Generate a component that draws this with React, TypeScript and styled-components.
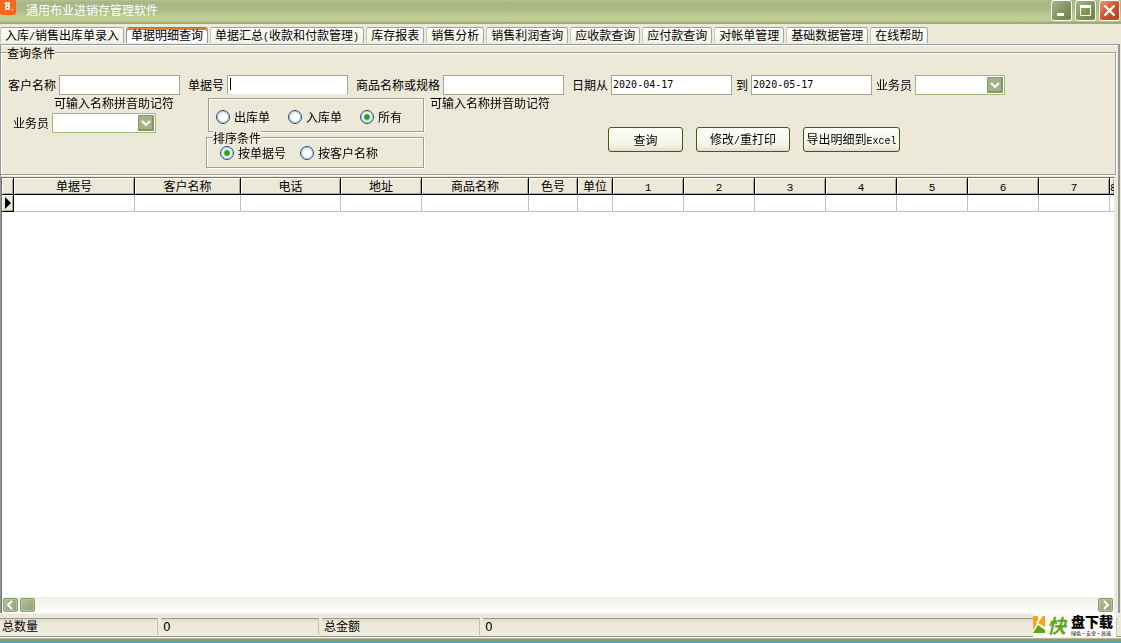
import React from "react";
import styled, { createGlobalStyle, css } from "styled-components";

const Global = createGlobalStyle`
  *, *::before, *::after { box-sizing: border-box; }
  body {
    margin: 0;
    background: #ece9d8;
    color: #000;
    font: 12px/14px "Noto Sans CJK SC", sans-serif;
  }
  button, input, select { font: inherit; color: inherit; margin: 0; padding: 0; border-radius: 0; }
`;

const Window = styled.div`
  display: flex;
  flex-direction: column;
  min-height: 100vh;
`;

const TitleBar = styled.header`
  display: flex;
  align-items: flex-start;
  height: 24px;
  padding-right: 1px;
  background: linear-gradient(#b4c293 0, #a6b583 3px, #abba87 10px, #bfce94 17px, #bdcb91 21px, #98a66f 23px, #a9b285 24px);
`;

const AppIcon = styled.svg`
  width: 16px;
  height: 16px;
  flex: none;
`;

const Title = styled.h1`
  flex: 1;
  margin: 0;
  padding: 3px 0 0 10px;
  font-size: 12px;
  line-height: 14px;
  font-weight: 400;
  color: #fff;
`;

const Captions = styled.div`
  display: flex;
  gap: 3px;
`;

const CaptionButton = styled.button<{ $close?: boolean }>`
  display: grid;
  place-items: center;
  width: 21px;
  height: 21px;
  border: 1px solid #fff;
  border-radius: 3px;
  background: ${(p) =>
    p.$close
      ? "linear-gradient(135deg, #e79c7c, #d2502b 50%, #b8431f)"
      : "linear-gradient(135deg, #a9b687, #86965f 50%, #6f7f49)"};
`;

const Tabs = styled.nav`
  display: flex;
  align-items: flex-end;
  gap: 2px;
  height: 20px;
  padding-bottom: 1px;
`;

const Tab = styled.button<{ $active?: boolean }>`
  height: 16px;
  padding: 0 4px 1px;
  border: 1px solid #919b9c;
  border-color: #a0a09a #9aac98 transparent #c9cbbd;
  border-bottom: 0;
  border-radius: 3px 3px 0 0;
  background: linear-gradient(#fdfdf9, #f3f1e4);
  line-height: 14px;
  white-space: nowrap;
  ${(p) =>
    p.$active &&
    css`
      background: #fcfcfe;
      border-color: #919b9c;
      box-shadow: inset 0 2px #e08234;
      border-top-color: #c9692a;
    `}
`;

const Half = styled.span`
  font-family: "Liberation Mono", monospace;
  font-size: 10px;
  line-height: 10px;
`;

const Page = styled.main`
  flex: 1;
  display: flex;
  flex-direction: column;
  margin-right: 1px;
  padding: 1px 2px 0 0;
  border: 1px solid #919b9c;
  border-right-width: 2px;
  border-bottom: 0;
  box-shadow: inset 0 1px #fff;
`;

const etched = css`
  border: 1px solid #9d9d9a;
  box-shadow: 1px 1px #fff, inset 1px 1px #fff;
`;

const Query = styled.fieldset`
  ${etched}
  position: relative;
  height: 123px;
  margin: 6px 0 2px;
  padding: 22px 0 0 7px;
  border-left: 0;
  min-width: 0;
`;

const Caption = styled.legend`
  position: absolute;
  top: -7px;
  left: 6px;
  padding: 0;
  background: #ece9d8;
`;

const Row = styled.div`
  display: flex;
  align-items: flex-start;
  & + & { margin-top: 1px; }
`;

const Field = styled.label<{ $after?: number }>`
  display: flex;
  align-items: center;
  gap: 3px;
  margin-right: ${(p) => p.$after ?? 8}px;
  white-space: nowrap;
`;

const TextBox = styled.input`
  width: 121px;
  height: 20px;
  padding: 0 1px 2px;
  border: 1px solid #a5a58f;
  background: #fff;
  font: 10px/16px "DejaVu Sans Mono", monospace;
  outline: 0;
  caret-color: transparent;
  &:focus {
    background: linear-gradient(#000, #000) 2px 2px / 1px 12px no-repeat #fff;
    border-bottom-color: #ece9d8;
  }
`;

const SelectWrap = styled.span<{ $w: number }>`
  position: relative;
  display: block;
  width: ${(p) => p.$w}px;
  height: 20px;
`;

const Select = styled.select`
  appearance: none;
  display: block;
  width: 100%;
  height: 100%;
  border: 1px solid #a2b77c;
  background: #fff;
  outline: 0;
`;

const Arrow = styled.svg`
  position: absolute;
  top: 2px;
  right: 2px;
  width: 16px;
  height: 16px;
  pointer-events: none;
`;

const LeftBlock = styled.div`
  display: flex;
  flex-direction: column;
  gap: 3px;
  width: 198px;
`;

const Hint = styled.span<{ $indent?: number }>`
  padding-left: ${(p) => p.$indent ?? 0}px;
  white-space: nowrap;
`;

const SalesRow = styled.div`
  display: flex;
  padding-left: 5px;
`;

const RadioBlock = styled.div`
  display: flex;
  flex-direction: column;
  align-items: flex-end;
  gap: 5px;
  width: 218px;
  padding-top: 2px;
  margin-right: 6px;
`;

const Kinds = styled.div`
  ${etched}
  display: flex;
  align-items: center;
  gap: 12px;
  width: 216px;
  height: 34px;
  padding: 4px 0 0 7px;
`;

const SortBox = styled.fieldset`
  ${etched}
  position: relative;
  width: 218px;
  height: 31px;
  margin: 0;
  padding: 8px 0 0 13px;
`;

const SortChoices = styled.div`
  display: flex;
  gap: 14px;
`;

const Choice = styled.label<{ $wide?: boolean }>`
  display: flex;
  align-items: center;
  gap: 4px;
  width: ${(p) => (p.$wide ? 66 : 60)}px;
  white-space: nowrap;
`;

const Radio = styled.input`
  appearance: none;
  flex: none;
  width: 14px;
  height: 14px;
  border: 1px solid #1d5281;
  border-radius: 50%;
  background: radial-gradient(circle at 60% 60%, #fff 30%, #dcdcd4);
  box-shadow: inset 0 0 0 1px #b9c9d6;
  &:checked {
    background: radial-gradient(circle, #22a31f 0 2px, #7dd07a 3px, #fff 4px);
  }
`;

const Actions = styled.div`
  display: flex;
  gap: 13px;
  padding: 31px 0 0 58px;
`;

const Action = styled.button<{ $w: number }>`
  width: ${(p) => p.$w}px;
  height: 25px;
  border: 1px solid #37620a;
  border-radius: 3px;
  background: linear-gradient(#fffffa, #f4f3e6 75%, #e6dcc6);
  white-space: nowrap;
`;

const GridArea = styled.section`
  flex: 1;
  display: flex;
  flex-direction: column;
  margin-right: 1px;
  border: 1px solid #716f64;
  border-width: 1px 1px 0 1px;
  border-right-color: #f1efe2;
  background: #fff;
`;

const Scroller = styled.div`
  flex: 1;
  overflow: hidden;
`;

const Table = styled.table`
  width: 100%;
  table-layout: fixed;
  border-collapse: separate;
  border-spacing: 0;
`;

const Th = styled.th`
  height: 17px;
  padding: 0;
  border-right: 1px solid #000;
  border-bottom: 1px solid #000;
  background: #ece9d8;
  box-shadow: inset 1px 1px #fff, inset -1px -1px #aca899;
  font-weight: 400;
  line-height: 14px;
  overflow: hidden;
  white-space: nowrap;
  &:last-child { border-right: 0; }
`;

const ColumnNo = styled(Half)`
  font-size: 11px;
`;

const Td = styled.td<{ $mark?: boolean }>`
  height: 17px;
  padding: 0;
  line-height: 0;
  border-right: 1px solid #c0c0c0;
  border-bottom: 1px solid #c0c0c0;
  &:last-child { border-right: 0; }
  ${(p) =>
    p.$mark &&
    css`
      background: #ece9d8;
      border-color: #000;
      box-shadow: inset 1px 1px #fff, inset -1px -1px #aca899;
    `}
`;

const ScrollBar = styled.div`
  display: flex;
  align-items: center;
  gap: 2px;
  height: 16px;
  padding: 0 1px;
  background: linear-gradient(#f0efe8, #fefefb);
`;

const ScrollButton = styled.button`
  display: grid;
  place-items: center;
  width: 15px;
  height: 14px;
  border: 1px solid #8b9c6c;
  border-radius: 2px;
  background: linear-gradient(135deg, #b3c09a, #8ea06e);
  box-shadow: inset 0 0 0 1px #b9c5a2;
`;

const Thumb = styled(ScrollButton)`
  margin-right: auto;
`;

const StatusBar = styled.footer`
  position: relative;
  display: flex;
  gap: 3px;
  height: 24px;
  padding: 4px 4px 2px 0;
  border-bottom: 1px solid #919b9c;
  border-top: 1px solid #f6f4ea;
`;

const Panel = styled.div<{ $fill?: boolean }>`
  flex: ${(p) => (p.$fill ? "1" : "0 0 158px")};
  height: 17px;
  padding-left: 2px;
  border-top: 1px solid #9d9a8c;
  border-right: 1px solid #c5c2b0;
  background: linear-gradient(#dcd9c8, #ece9d8 4px, #efecdf);
  line-height: 13px;
`;

const Num = styled.output`
  font: 12px/13px "DejaVu Sans", sans-serif;
`;

const Mark = styled.div`
  position: absolute;
  right: 5px;
  bottom: -1px;
  display: flex;
  align-items: center;
  width: 83px;
  height: 24px;
  background: #fbfaf5;
`;

const MarkLogo = styled.svg`
  flex: none;
  width: 13px;
  height: 18px;
`;

const MarkKuai = styled.span`
  flex: none;
  width: 22px;
  padding-left: 1px;
  color: #5ea51c;
  font-size: 19px;
  line-height: 22px;
  font-weight: 700;
  font-style: italic;
`;

const MarkText = styled.span`
  display: flex;
  flex-direction: column;
  padding-left: 3px;
  white-space: nowrap;
`;

const MarkName = styled.b`
  font-size: 14px;
  line-height: 16px;
  font-weight: 900;
`;

const MarkNote = styled.small`
  font-size: 5px;
  line-height: 8px;
`;

const BottomEdge = styled.div`
  height: 6px;
  background: linear-gradient(#f4f2e6 0 1px, #b7b99c 1px 2px, #8b9a67 2px 5px, #27a5e6 5px);
`;

function DropArrow() {
  return (
    <Arrow viewBox="0 0 16 16" aria-hidden="true">
      <rect width="16" height="16" rx="1" fill="#869668" />
      <rect x="1" y="1" width="13" height="13" fill="#a3b287" />
      <path d="M4 6l4 4 4-4" fill="none" stroke="#fff" strokeWidth="2" />
    </Arrow>
  );
}

const tabs: React.ReactNode[] = [
  <>入库<Half>/</Half>销售出库单录入</>,
  "单据明细查询",
  <>单据汇总<Half>(</Half>收款和付款管理<Half>)</Half></>,
  "库存报表",
  "销售分析",
  "销售利润查询",
  "应收款查询",
  "应付款查询",
  "对帐单管理",
  "基础数据管理",
  "在线帮助",
];

const columns: [string, number | undefined][] = [
  ["单据号", 121],
  ["客户名称", 106],
  ["电话", 100],
  ["地址", 81],
  ["商品名称", 107],
  ["色号", 49],
  ["单位", 35],
  ["1", 71],
  ["2", 71],
  ["3", 71],
  ["4", 71],
  ["5", 71],
  ["6", 71],
  ["7", 71],
  ["8", undefined],
];

export default function App() {
  return (
    <>
      <Global />
      <Window>
        <TitleBar>
          <AppIcon viewBox="0 0 16 16" aria-hidden="true">
            <path d="M0 0h16v13l-2 2H2l-2-1z" fill="#f8661a" />
            <path d="M5 3h4v3M9 6C6 5 5 7 6 9h3V6M5 3l2 3" fill="none" stroke="#fff" strokeWidth="1.600" />
            <path d="M12 9h1v2h-1z" fill="#fff" />
          </AppIcon>
          <Title>通用布业进销存管理软件</Title>
          <Captions>
            <CaptionButton aria-label="最小化">
              <svg width="15" height="15"><path d="M3 10h7v3H3z" fill="#fff" /></svg>
            </CaptionButton>
            <CaptionButton aria-label="最大化">
              <svg width="15" height="15"><path d="M2 2h11v11H2zM3 5v7h9V5z" fill="#fff" fillRule="evenodd" /></svg>
            </CaptionButton>
            <CaptionButton aria-label="关闭" $close>
              <svg width="15" height="15"><path d="M2.500 2.500l10 10M12.500 2.500l-10 10" stroke="#fff" strokeWidth="2.400" /></svg>
            </CaptionButton>
          </Captions>
        </TitleBar>
        <Tabs>
          {tabs.map((t, i) => (
            <Tab key={i} $active={i === 1}>{t}</Tab>
          ))}
        </Tabs>
        <Page>
          <Query>
            <Caption>查询条件</Caption>
            <Row>
              <Field>客户名称<TextBox /></Field>
              <Field>单据号<TextBox autoFocus /></Field>
              <Field>商品名称或规格<TextBox /></Field>
              <Field $after={4}>日期从<TextBox defaultValue="2020-04-17" /></Field>
              <Field $after={4}>到<TextBox defaultValue="2020-05-17" /></Field>
              <Field>
                业务员
                <SelectWrap $w={90}><Select /><DropArrow /></SelectWrap>
              </Field>
            </Row>
            <Row>
              <LeftBlock>
                <Hint $indent={46}>可输入名称拼音助记符</Hint>
                <SalesRow>
                  <Field>
                    业务员
                    <SelectWrap $w={104}><Select /><DropArrow /></SelectWrap>
                  </Field>
                </SalesRow>
              </LeftBlock>
              <RadioBlock>
                <Kinds>
                  <Choice><Radio type="radio" name="kind" />出库单</Choice>
                  <Choice><Radio type="radio" name="kind" />入库单</Choice>
                  <Choice><Radio type="radio" name="kind" defaultChecked />所有</Choice>
                </Kinds>
                <SortBox>
                  <Caption>排序条件</Caption>
                  <SortChoices>
                    <Choice $wide><Radio type="radio" name="sort" defaultChecked />按单据号</Choice>
                    <Choice $wide><Radio type="radio" name="sort" />按客户名称</Choice>
                  </SortChoices>
                </SortBox>
              </RadioBlock>
              <Hint>可输入名称拼音助记符</Hint>
              <Actions>
                <Action $w={75}>查询</Action>
                <Action $w={94}>修改<Half>/</Half>重打印</Action>
                <Action $w={97}>导出明细到<Half>Excel</Half></Action>
              </Actions>
            </Row>
          </Query>
          <GridArea>
            <Scroller>
              <Table>
                <colgroup>
                  <col style={{ width: 12 }} />
                  {columns.map(([name, w]) => <col key={name} style={{ width: w }} />)}
                </colgroup>
                <thead>
                  <tr>
                    <Th />
                    {columns.map(([name]) => (
                      <Th key={name}>{/^\d$/.test(name) ? <ColumnNo>{name}</ColumnNo> : name}</Th>
                    ))}
                  </tr>
                </thead>
                <tbody>
                  <tr>
                    <Td $mark>
                      <svg width="10" height="12"><path d="M3 0v12l6-6z" /></svg>
                    </Td>
                    {columns.map(([name]) => <Td key={name} />)}
                  </tr>
                </tbody>
              </Table>
            </Scroller>
            <ScrollBar>
              <ScrollButton aria-label="向左滚动">
                <svg width="9" height="10"><path d="M6 1L2 5l4 4" fill="none" stroke="#fff" strokeWidth="2" /></svg>
              </ScrollButton>
              <Thumb aria-label="滚动块" />
              <ScrollButton aria-label="向右滚动">
                <svg width="9" height="10"><path d="M3 1l4 4-4 4" fill="none" stroke="#fff" strokeWidth="2" /></svg>
              </ScrollButton>
            </ScrollBar>
          </GridArea>
        </Page>
        <StatusBar>
          <Panel>总数量</Panel>
          <Panel><Num>0</Num></Panel>
          <Panel>总金额</Panel>
          <Panel $fill><Num>0</Num></Panel>
          <Mark>
            <MarkLogo viewBox="0 0 13 18" aria-hidden="true">
              <path d="M0 0h5v4L3 7l-3-3zM0 3l4 5-4 6z" fill="#f5a51d" />
              <path d="M12 0v11L5 7l5-7z" fill="#f5a51d" />
              <path d="M0 17l5-8 7 5v3z" fill="#5ea51c" />
            </MarkLogo>
            <MarkKuai>快</MarkKuai>
            <MarkText>
              <MarkName>盘下载</MarkName>
              <MarkNote>绿色·安全·高速</MarkNote>
            </MarkText>
          </Mark>
        </StatusBar>
        <BottomEdge />
      </Window>
    </>
  );
}
